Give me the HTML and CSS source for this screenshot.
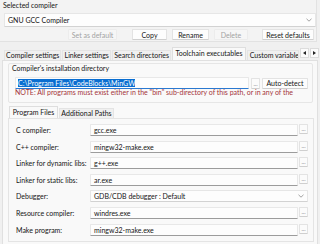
FILE: index.html
```html
<!DOCTYPE html>
<html>
<head>
<meta charset="UTF-8">
<title>Compiler settings</title>
<link rel="stylesheet" href="styles.css">
</head>
<body>

<div class="top">
	<div class="caption">Selected compiler</div>
	<div class="combo combo-wide">
		<span>GNU GCC Compiler</span>
		<svg class="chev" width="6" height="4" viewBox="0 0 6 4"><polyline points="0.5,0.8 3,3.2 5.5,0.8" fill="none" stroke="#8a8a8a" stroke-width="0.8"/></svg>
	</div>
	<div class="btn-row">
		<span class="btn disabled b-set">Set as default</span>
		<span class="btn b-copy">Copy</span>
		<span class="btn b-rename">Rename</span>
		<span class="btn disabled b-delete">Delete</span>
		<span class="btn b-reset">Reset defaults</span>
	</div>
</div>

<div class="tabs">
	<span class="tab t-compiler">Compiler settings</span>
	<span class="tab t-linker">Linker settings</span>
	<span class="tab t-search">Search directories</span>
	<span class="tab active t-toolchain">Toolchain executables</span>
	<span class="tab t-custom">Custom variables</span>
	<span class="arrow">
		<svg width="3" height="4" viewBox="0 0 3 4"><polygon points="3,0 0,2 3,4" fill="#222"/></svg>
	</span>
	<span class="arrow">
		<svg width="3" height="4" viewBox="0 0 3 4"><polygon points="0,0 3,2 0,4" fill="#222"/></svg>
	</span>
</div>

<div class="page">
	<div class="group">
		<div class="group-title">Compiler's installation directory</div>
		<div class="dir-row">
			<div class="input focused dir-input"><span class="sel">C:\Program Files\CodeBlocks\MinGW</span></div>
			<span class="btn dots">...</span>
			<span class="btn b-auto">Auto-detect</span>
		</div>
		<div class="note">NOTE: All programs must exist either in the "bin" sub-directory of this path, or in any of the</div>
	</div>

	<div class="subtabs">
		<span class="tab active s-files">Program Files</span>
		<span class="tab s-paths">Additional Paths</span>
	</div>

	<div class="subpage">
		<div class="grid">
			<span class="label">C compiler:</span>
			<div class="input">gcc.exe</div>
			<span class="btn dots">...</span>

			<span class="label">C++ compiler:</span>
			<div class="input">mingw32-make.exe</div>
			<span class="btn dots">...</span>

			<span class="label">Linker for dynamic libs:</span>
			<div class="input">g++.exe</div>
			<span class="btn dots">...</span>

			<span class="label">Linker for static libs:</span>
			<div class="input">ar.exe</div>
			<span class="btn dots">...</span>

			<span class="label">Debugger:</span>
			<div class="combo combo-span">
				<span>GDB/CDB debugger : Default</span>
				<svg class="chev" width="6" height="4" viewBox="0 0 6 4"><polyline points="0.5,0.8 3,3.2 5.5,0.8" fill="none" stroke="#8a8a8a" stroke-width="0.8"/></svg>
			</div>

			<span class="label">Resource compiler:</span>
			<div class="input">windres.exe</div>
			<span class="btn dots">...</span>

			<span class="label">Make program:</span>
			<div class="input">mingw32-make.exe</div>
			<span class="btn dots">...</span>
		</div>
	</div>
</div>

</body>
</html>
```

FILE: styles.css
```css
html, body {
	margin: 0;
	padding: 0;
}

body {
	width: 320px;
	height: 244px;
	overflow: hidden;
	background: #f0f0f0;
	color: #151515;
	font-family: Lato, "Open Sans", sans-serif;
	font-size: 7px;
	line-height: 10px;
}

/* selected compiler */

.top {
	width: 317px;
	height: 42px;
	box-sizing: border-box;
	border-right: 1px solid #e2e2e2;
	border-bottom: 1px solid #e2e2e2;
	background: #f3f3f3;
}

.caption {
	padding-left: 3px;
	height: 10px;
}

.combo {
	display: flex;
	align-items: center;
	justify-content: space-between;
	box-sizing: border-box;
	background: #fdfdfd;
	border: 1px solid #e6e6e6;
	border-bottom-color: #d2d2d2;
	border-radius: 1px;
	padding: 0 3px 0 4px;
	white-space: nowrap;
}

.combo-wide {
	margin: 3px 0 0 4px;
	width: 312px;
	height: 14px;
	padding-left: 3px;
}

.chev {
	flex: none;
}

.btn-row {
	display: flex;
	margin-top: 2px;
	height: 11px;
}

.btn {
	display: flex;
	align-items: center;
	justify-content: center;
	box-sizing: border-box;
	background: #fdfdfd;
	border: 1px solid #e3e3e3;
	border-bottom-color: #cfcfcf;
	border-radius: 1px;
	white-space: nowrap;
}

.btn.disabled {
	background: #f6f6f6;
	border-color: #ececec;
	color: #a2a2a2;
}

.b-set { margin-left: 68px; width: 49px; }
.b-copy { margin-left: 15px; width: 35px; }
.b-rename { margin-left: 5px; width: 37px; }
.b-delete { margin-left: 5px; width: 34px; }
.b-reset { margin-left: 14px; width: 52px; }

/* notebook tabs */

.tabs {
	display: flex;
	align-items: flex-end;
	height: 13px;
	margin-top: 5px;
	padding-left: 4px;
}

.tab {
	box-sizing: border-box;
	height: 10px;
	line-height: 9px;
	text-align: center;
	white-space: nowrap;
	overflow: hidden;
	background: #f0f0f0;
	border: 1px solid #e4e4e4;
	border-bottom: none;
	margin-right: 1px;
}

.tab.active {
	height: 13px;
	line-height: 11px;
	background: #f9f9f9;
	border-color: #dedede;
}

.t-compiler { width: 58px; }
.t-linker { width: 49px; }
.t-search { width: 60px; }
.t-toolchain { width: 74px; }
.t-custom { width: 53px; text-align: left; padding-left: 2px; }

.arrow {
	display: flex;
	align-items: center;
	justify-content: center;
	box-sizing: border-box;
	width: 9px;
	height: 10px;
	margin: 0 1px 2px 0;
	background: #fbfbfb;
	border: 1px solid #dcdcdc;
}

.page {
	box-sizing: border-box;
	width: 316px;
	height: 190px;
	margin-left: 2px;
	padding: 2px 4px 0 4px;
	background: #f9f9f9;
	border: 1px solid #e0e0e0;
}

/* installation directory */

.group {
	box-sizing: border-box;
	height: 40px;
	margin-left: 1px;
	padding-left: 6px;
	border: 1px solid #e6e6e6;
	border-radius: 2px;
}

.group-title {
	margin-left: -3px;
	height: 9px;
	line-height: 9px;
}

.dir-row {
	display: flex;
	align-items: center;
	margin-top: 4px;
	height: 12px;
}

.input {
	box-sizing: border-box;
	height: 12px;
	line-height: 10px;
	padding-left: 3px;
	background: #fdfdfd;
	border: 1px solid #e8e8e8;
	border-bottom-color: #9c9c9c;
	border-radius: 1px;
	white-space: nowrap;
	overflow: hidden;
}

.dir-input {
	width: 234px;
	padding-left: 2px;
}

.input.focused {
	border-bottom: 1px solid #2b79d0;
}

.sel {
	background: #0a6ed1;
	color: #fff;
}

.dots {
	width: 9px;
	height: 11px;
	margin-left: 2px;
	font-size: 6px;
	line-height: 8px;
	color: #777;
	align-items: flex-end;
	background: #fbfbfb;
}

.b-auto {
	width: 46px;
	height: 11px;
	margin-left: 2px;
}

.note {
	color: #a4343a;
	white-space: nowrap;
	overflow: hidden;
	line-height: 9px;
	margin-top: -1px;
}

/* program files */

.subtabs {
	display: flex;
	align-items: flex-end;
	height: 12px;
	margin: 3px 0 0 2px;
}

.subtabs .tab {
	height: 10px;
}

.subtabs .tab.active {
	height: 12px;
	line-height: 10px;
}

.s-files { width: 49px; }
.s-paths { width: 55px; }

.subpage {
	box-sizing: border-box;
	width: 306px;
	height: 124px;
	margin-left: 1px;
	padding: 5px 5px 0 7px;
	background: #f9f9f9;
	border: 1px solid #e4e4e4;
}

.grid {
	display: grid;
	grid-template-columns: 73px 208px 9px;
	grid-auto-rows: 12px;
	column-gap: 1px;
	row-gap: 4.6px;
}

.label {
	line-height: 12px;
	white-space: nowrap;
}

.grid .dots {
	margin-left: 0;
	height: 10px;
}

.combo-span {
	grid-column: 2 / 4;
	height: 12px;
	padding-left: 3px;
}
```
